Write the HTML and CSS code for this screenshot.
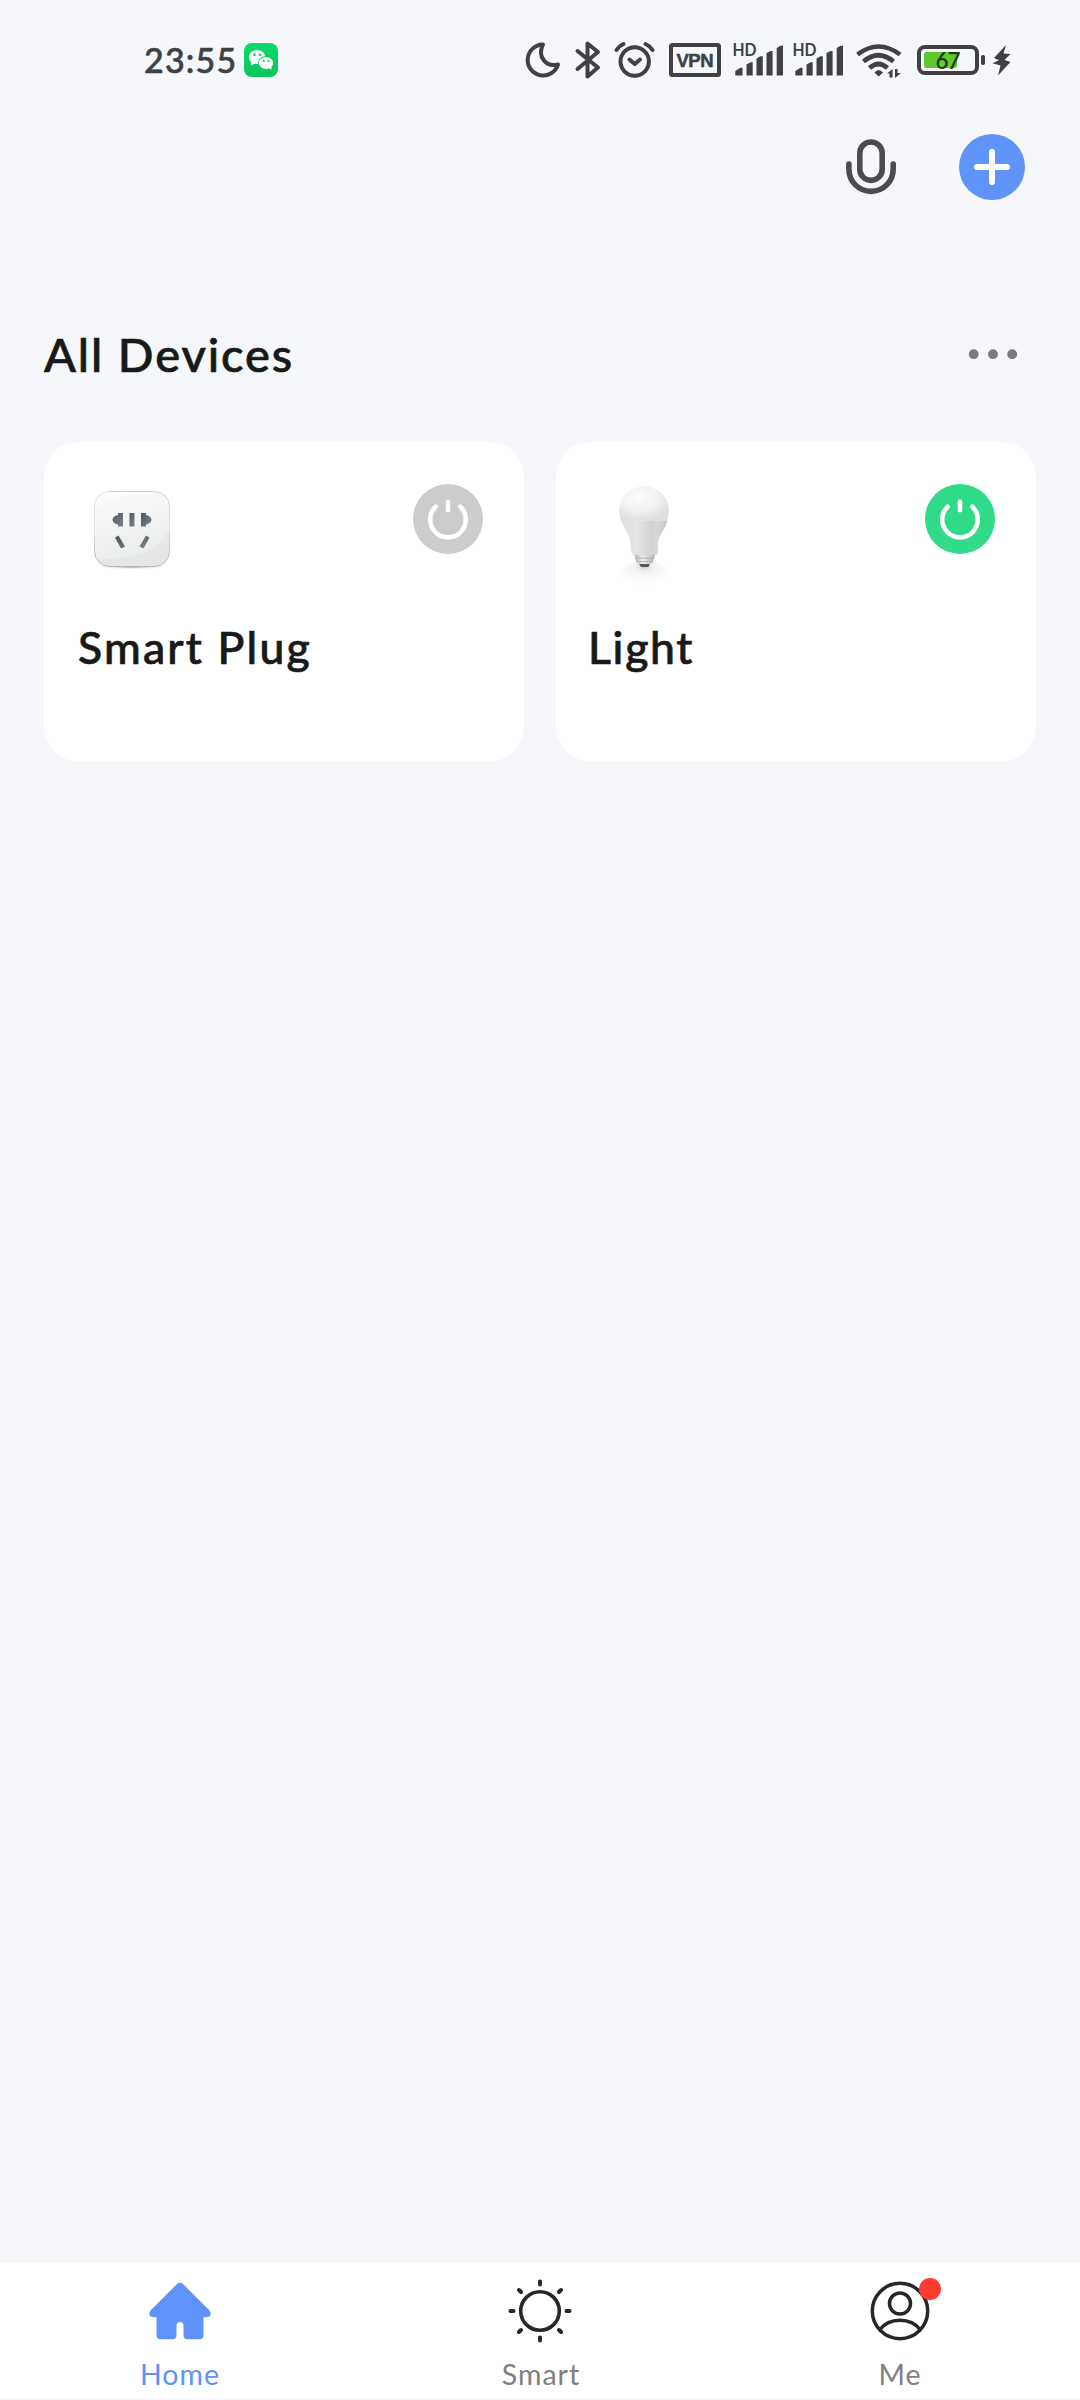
FILE: index.html
```html
<!DOCTYPE html>
<html lang="en">
<head>
<meta charset="utf-8">
<title>All Devices</title>
<link rel="stylesheet" href="styles.css">
</head>
<body>
<div class="screen">
  <div class="status">
    <span class="time">23:55</span>
    <svg class="wechat" width="34" height="34" viewBox="244 43 34 34">
      <defs><linearGradient id="wc" x1="0" y1="0" x2="0" y2="1"><stop offset="0" stop-color="#0bdc6b"/><stop offset="1" stop-color="#08c45c"/></linearGradient></defs>
      <rect x="244" y="43" width="34" height="34" rx="8" fill="url(#wc)"/>
      <path d="M251 61l.3 4.5 4-2.5z" fill="#fff"/>
      <ellipse cx="257" cy="57" rx="8.2" ry="7" fill="#fff"/>
      <ellipse cx="266" cy="63" rx="8" ry="7" fill="#09ce62"/>
      <ellipse cx="266" cy="63" rx="7.2" ry="6.1" fill="#fff"/>
      <path d="M268 67l3.500 3-.3-5z" fill="#fff"/>
      <g fill="#09ce62"><circle cx="254.500" cy="54.700" r="1.300"/><circle cx="260" cy="54.700" r="1.300"/><circle cx="263.700" cy="61" r="1.100"/><circle cx="268.500" cy="61" r="1.100"/></g>
    </svg>
    <div class="indicators">
      <svg width="48" height="40" viewBox="520 40 48 40"><path d="M543 44.500A15.500 15.500 0 1 0 558 64.500C546 67.500 537 57 543 44.500Z" class="line"/></svg>
      <svg width="40" height="40" viewBox="568 40 40 40"><path d="M577.500 51L598 67.500L587.500 76.500V43.500L598 52L577.500 69" class="line"/></svg>
      <svg width="54" height="40" viewBox="608 40 54 40"><circle cx="634.700" cy="61.500" r="14.200" class="line"/><path d="M629.500 59.500L634.700 64L640 59.500" class="line"/><path d="M616.500 50Q619 46 623.500 44M645.500 44Q650 46 652.500 50" class="line"/></svg>
      <svg width="65" height="40" viewBox="662 40 65 40"><rect x="671" y="45" width="48" height="30" rx="1.500" class="line"/><text x="695" y="66.500" font-size="18.500" text-anchor="middle" textLength="37" class="vpn">VPN</text></svg>
      <svg width="60" height="40" viewBox="727 40 60 40"><text x="732.500" y="56" font-size="16.500" textLength="24" lengthAdjust="spacingAndGlyphs" class="hd">HD</text><path d="M735.300 75.500V71L740.500 67.700H742.500V75.500ZM746.500 75.500V64.500L750.500 62.300H752.700V75.500ZM756.500 75.500V58.500L760.500 56.300H762.800V75.500ZM766.500 75.500V53L770.500 51H772.600V75.500ZM776.700 75.500V48L780.500 45.700H783V75.500Z" class="bars"/></svg>
      <svg width="60" height="40" viewBox="727 40 60 40"><text x="732.500" y="56" font-size="16.500" textLength="24" lengthAdjust="spacingAndGlyphs" class="hd">HD</text><path d="M735.300 75.500V71L740.500 67.700H742.500V75.500ZM746.500 75.500V64.500L750.500 62.300H752.700V75.500ZM756.500 75.500V58.500L760.500 56.300H762.800V75.500ZM766.500 75.500V53L770.500 51H772.600V75.500ZM776.700 75.500V48L780.500 45.700H783V75.500Z" class="bars"/></svg>
      <svg width="63" height="40" viewBox="847 40 63 40"><path d="M857.500 54.500Q878.500 38.500 900 54.500M863.500 61.500Q878.500 49 893.500 61.500M869.500 68Q878.500 60 887.500 68" class="arc"/><path d="M874.500 72.500Q878.500 67.500 883 72.500L878.700 76.500Z" class="bars"/><path d="M887 73.500L892.500 69V77.500H889.500V73.500ZM895 69H897.500V73H901L895 78Z" fill="#404142"/></svg>
      <svg width="79" height="40" viewBox="910 40 79 40"><rect x="924" y="52" width="33" height="16" rx="2.500" fill="#61c92b"/><rect x="919" y="47" width="58" height="26" rx="6" class="line"/><rect x="981" y="55" width="4" height="10" rx="1.800" fill="#404142"/><text x="948" y="68.500" font-size="22.500" text-anchor="middle" textLength="25" class="level">67</text></svg>
      <svg width="26" height="40" viewBox="989 40 26 40"><path d="M1006 45L994 58L999 60.300L992.500 63.300L1000.500 65.500L998 75.500L1010.500 62L1004.500 60L1010.500 54L1003.500 53.500Z" fill="#404142"/></svg>
    </div>
  </div>

  <div class="toolbar">
    <svg width="50" height="66" viewBox="846 134 50 66" fill="none" stroke="#4b4c4d" stroke-width="5.600" stroke-linecap="round"><rect x="859.800" y="142" width="22.400" height="38.400" rx="11.200"/><path d="M848.900 164V169.200A22.150 22.150 0 0 0 893.200 169.200V164"/></svg>
    <svg width="66" height="66" viewBox="0 0 66 66"><circle cx="33" cy="33" r="33" fill="#6094f8"/><path d="M18 33H48M33 18V48" stroke="#fff" stroke-width="6" stroke-linecap="round"/></svg>
  </div>

  <div class="heading">
    <h1 class="title">All Devices</h1>
    <svg width="50" height="12" viewBox="968 348 50 12" fill="#7b7b7d"><circle cx="973.700" cy="354.200" r="4.900"/><circle cx="993" cy="354.200" r="4.900"/><circle cx="1012.200" cy="354.200" r="4.900"/></svg>
  </div>

  <div class="cards">
    <div class="card">
      <div class="card-top">
        <svg width="100" height="108" viewBox="79 477 100 108">
          <defs>
            <linearGradient id="plate" x1="0" y1="0" x2=".25" y2="1"><stop offset="0" stop-color="#fbfbfb"/><stop offset="1" stop-color="#eaebeb"/></linearGradient>
            <linearGradient id="edge" x1="0" y1="0" x2="0" y2="1"><stop offset="0" stop-color="#cfcfd1"/><stop offset=".5" stop-color="#e2e2e4"/><stop offset="1" stop-color="#a9a9b2"/></linearGradient>
            <linearGradient id="slot" x1="0" y1="0" x2="1" y2="1"><stop offset="0" stop-color="#4d565c"/><stop offset="1" stop-color="#7c868c"/></linearGradient>
            <radialGradient id="cast"><stop offset="0" stop-color="#9d9da8"/><stop offset="1" stop-color="#fff" stop-opacity="0"/></radialGradient>
            <clipPath id="plateclip"><rect x="94.500" y="491.500" width="75" height="75" rx="15"/></clipPath>
          </defs>
          <ellipse cx="132" cy="567" rx="38" ry="2.500" fill="url(#cast)"/>
          <rect x="94.500" y="491.500" width="75" height="75" rx="15" fill="url(#plate)" stroke="url(#edge)"/>
          <g clip-path="url(#plateclip)"><path d="M95 508Q120 494 150 492H94Z" fill="#fff" opacity=".5"/><path d="M169 530Q158 556 112 559Q100 559 95 557V567H170Z" fill="#dfe1e1" opacity=".45"/></g>
          <g fill="url(#slot)"><path d="M123 513V526.500H118V524.500Q112.500 523 112.500 519.700Q112.500 516.500 118 515V513Z"/><rect x="129.500" y="513" width="5" height="13.500"/><path d="M141 513V526.500H146V524.500Q151.500 523 151.500 519.700Q151.500 516.500 146 515V513Z"/><path d="M115 537.500L118.500 535.500L125 546.500L121 548.500ZM149.500 537.500L146 535.500L139.500 546.500L143.500 548.500Z"/></g>
        </svg>
        <svg class="power" width="70" height="70" viewBox="0 0 70 70"><circle cx="35" cy="35" r="35" fill="#ccc"/><path d="M22.700 22.700A17.800 17.800 0 1 0 47.300 22.700M35 17.700V26.300" class="glyph"/></svg>
      </div>
      <div class="name">Smart Plug</div>
    </div>
    <div class="card">
      <div class="card-top">
        <svg width="100" height="108" viewBox="591 477 100 108">
          <defs>
            <radialGradient id="globe" cx=".4" cy=".32" r=".7"><stop offset="0" stop-color="#fdfdfd"/><stop offset=".55" stop-color="#f1f1f1"/><stop offset="1" stop-color="#dedede"/></radialGradient>
            <linearGradient id="body" x1="0" y1="0" x2="1" y2="0"><stop offset="0" stop-color="#dedede"/><stop offset=".35" stop-color="#e5e5e5"/><stop offset=".65" stop-color="#d3d3d3"/><stop offset=".8" stop-color="#d5d5d5"/><stop offset="1" stop-color="#c4c4c4"/></linearGradient>
            <linearGradient id="screw" x1="0" y1="0" x2="1" y2="0"><stop offset="0" stop-color="#b5b5b5"/><stop offset=".4" stop-color="#eee"/><stop offset="1" stop-color="#b0b0b0"/></linearGradient>
            <radialGradient id="floor" cy=".32" fy=".25"><stop offset="0" stop-color="#d2d2d2"/><stop offset=".35" stop-color="#f0f0f0"/><stop offset="1" stop-color="#fdfdfd"/></radialGradient>
          </defs>
          <ellipse cx="644.500" cy="573" rx="23" ry="12" fill="url(#floor)"/>
          <path d="M621 520.500H667.500C664 532 658 535 657.800 545V552Q657.800 555 654.500 555H634.500Q631.500 555 631.300 552L630.700 545C630.500 535 624 529 621 520.500Z" fill="url(#body)"/>
          <path d="M621 520.700A24.900 24.900 0 1 1 667 520.700Z" fill="url(#globe)"/>
          <path d="M634.500 555H655L652.500 563L649.500 564.500H639.500L636.500 562.500Z" fill="url(#screw)"/>
          <path d="M635 558.200H654.500M636 561.500H653" stroke="#aaa" stroke-width=".8"/>
          <path d="M639 564H649.700L648.500 567H641Z" fill="#555"/>
        </svg>
        <svg class="power" width="70" height="70" viewBox="0 0 70 70"><circle cx="35" cy="35" r="35" fill="#2fdb87"/><path d="M22.700 22.700A17.800 17.800 0 1 0 47.300 22.700M35 17.700V26.300" class="glyph"/></svg>
      </div>
      <div class="name light">Light</div>
    </div>
  </div>

  <div class="nav">
    <div class="tab active">
      <svg width="80" height="80" viewBox="140 2271 80 80"><path d="M177 2284Q180 2281.300 183 2284L209.500 2310.500Q212 2314 209.500 2316.300Q208.500 2317.300 203.500 2317.300V2335Q203.500 2339.300 199.500 2339.300H187.500Q183.500 2339.300 183.500 2335V2325.500A3.500 3.500 0 0 0 176.500 2325.500V2335Q176.500 2339.300 172.500 2339.300H160.500Q156.500 2339.300 156.500 2335V2317.300Q151.500 2317.300 150.500 2316.300Q148 2314 150.500 2310.500Z" fill="#5f93f7"/></svg>
      <span class="label home">Home</span>
    </div>
    <div class="tab">
      <svg width="80" height="80" viewBox="-40 -40 80 80" class="ink"><circle r="19.300" stroke-width="3.600"/><path d="M0-29.500V-26.500M0 26.500V29.500M-29.500 0H-26.500M26.500 0H29.500M-21-21L-19-19M21-21L19-19M-21 21L-19 19M21 21L19 19" stroke-width="4"/></svg>
      <span class="label smart">Smart</span>
    </div>
    <div class="tab">
      <svg width="84" height="80" viewBox="858 2271 84 80"><g class="ink" stroke-width="3.500"><circle cx="900" cy="2311" r="27.700"/><circle cx="900" cy="2303.500" r="10.500"/><path d="M880 2329.500C889 2317 911 2317 920 2329.500"/></g><circle cx="930" cy="2289" r="11" fill="#ff3b30"/></svg>
      <span class="label me">Me</span>
    </div>
  </div>
</div>
</body>
</html>
```
FILE: styles.css
```css
* { box-sizing: border-box; margin: 0; padding: 0; }
svg { display: block; flex: none; }
body { background: #f5f7fb; font-family: Lato, "Open Sans", sans-serif; color: #181919; }
.screen { width: 1080px; height: 2400px; display: flex; flex-direction: column; padding-bottom: 2px; }

.status { display: flex; align-items: center; height: 80px; padding: 40px 65px 0 144px; color: #404142; }
.time { width: 100px; font-size: 34px; line-height: 40px; font-weight: 500; letter-spacing: 1.2px; white-space: nowrap; -webkit-text-stroke: .6px currentColor; }
.indicators { display: flex; margin-left: auto; }
.line { fill: none; stroke: #404142; stroke-width: 4; stroke-linecap: round; stroke-linejoin: round; }
.arc { fill: none; stroke: #404142; stroke-width: 4.6; }
.bars { fill: #404142; }
.vpn { font-family: "Liberation Sans", sans-serif; font-weight: 700; fill: #404142; stroke: #404142; stroke-width: .5; }
.hd { font-weight: 700; fill: #404142; }
.level { font-weight: 600; fill: #1f3d10; }

.toolbar { display: flex; justify-content: flex-end; gap: 63px; height: 244px; padding: 54px 55px 0 0; }
.heading { display: flex; align-items: center; justify-content: space-between; height: 60px; padding: 0 62px 0 44px; }
.title { font-size: 47px; line-height: 60px; font-weight: 500; letter-spacing: 1.9px; -webkit-text-stroke: .7px currentColor; }

.cards { display: grid; grid-template-columns: 1fr 1fr; gap: 32px; padding: 58px 44px 0; }
.card { height: 319px; padding: 35px 41px 0 35px; border-radius: 34px; background: #fff; }
.card-top { display: flex; justify-content: space-between; height: 142px; }
.power { margin-top: 7px; }
.glyph { fill: none; stroke: #fff; stroke-width: 4.6; stroke-linecap: round; }
.name { margin-left: -1px; font-size: 44.5px; line-height: 56px; font-weight: 500; letter-spacing: 2.2px; -webkit-text-stroke: .7px currentColor; }
.light { margin-left: -3px; letter-spacing: 1.7px; }

.nav { display: grid; grid-template-columns: repeat(3, 1fr); height: 135px; margin-top: auto; padding-top: 8px; background: #fff; }
.tab { display: flex; flex-direction: column; align-items: center; color: #808080; }
.active { color: #5f93f7; }
.label { margin-top: 5px; font-size: 28.5px; line-height: 36px; letter-spacing: 1px; }
.smart { padding-left: 2px; }
.ink { fill: none; stroke: #25282b; stroke-linecap: round; }
```
